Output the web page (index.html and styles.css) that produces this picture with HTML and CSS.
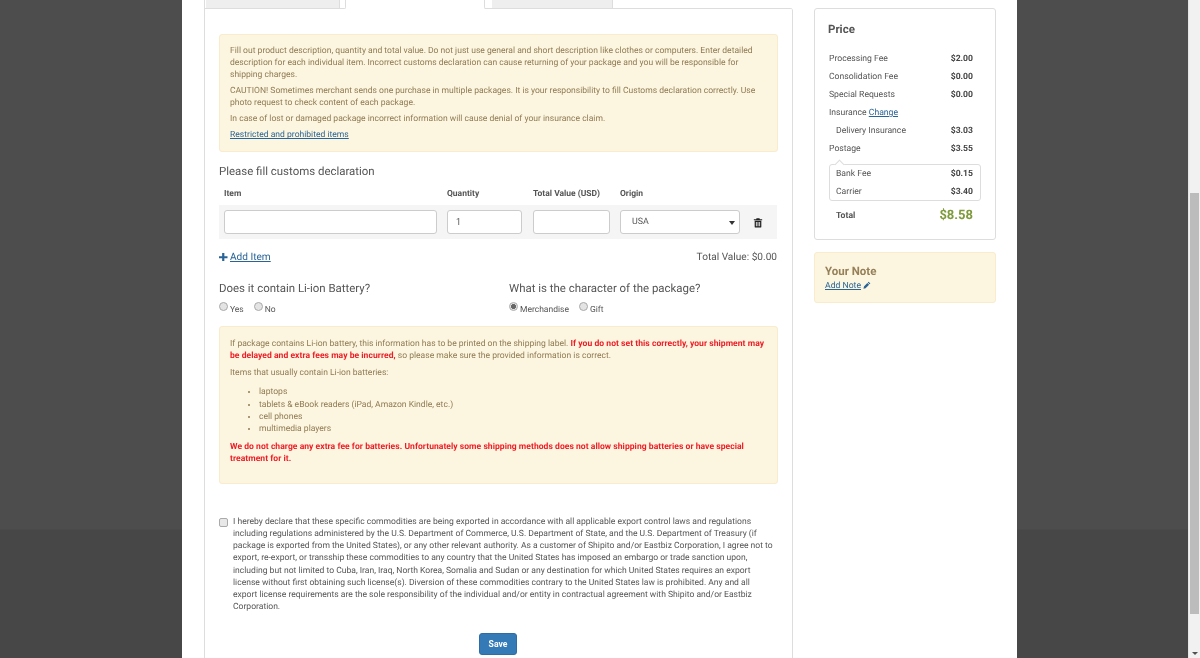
FILE: index.html
```html
<!DOCTYPE html>
<html lang="en">
<head>
<meta charset="utf-8">
<title>Customs declaration</title>
<link rel="stylesheet" href="styles.css">
</head>
<body>
<div class="viewport">
  <div class="backdrop">
    <div class="sheet">
      <main class="main">
        <div class="tabs">
          <div class="tab tab-first"><span class="tab-face"></span></div>
          <div class="tab tab-active"></div>
          <div class="tab tab-last"><span class="tab-face"></span></div>
        </div>
        <div class="panel">
          <section class="alert alert-top">
            <p>Fill out product description, quantity and total value. Do not just use general and short description like clothes or computers. Enter detailed description for each individual item. Incorrect customs declaration can cause returning of your package and you will be responsible for shipping charges.</p>
            <p>CAUTION! Sometimes merchant sends one purchase in multiple packages. It is your responsibility to fill Customs declaration correctly. Use photo request to check content of each package.</p>
            <p>In case of lost or damaged package incorrect information will cause denial of your insurance claim.</p>
            <p><a class="link" href="#">Restricted and prohibited items</a></p>
          </section>
          <h2 class="heading heading-customs">Please fill customs declaration</h2>
          <div class="col-heads">
            <span class="col-item">Item</span>
            <span class="col-qty">Quantity</span>
            <span class="col-total">Total Value (USD)</span>
            <span class="col-origin">Origin</span>
          </div>
          <div class="item-row">
            <input class="field col-item" type="text" aria-label="Item">
            <input class="field col-qty" type="text" value="1" aria-label="Quantity">
            <input class="field col-total" type="text" aria-label="Total value">
            <div class="field col-origin select-box">USA</div>
            <svg class="trash" viewBox="0 0 12 12" aria-hidden="true"><path fill="#222" d="M4.2 1h3.6l.4 1H11v1.3H1V2h2.8zM2 4h8v7a1 1 0 0 1-1 1H3a1 1 0 0 1-1-1zm1.5 1.3v5.2h1V5.3zm2 0v5.2h1V5.3zm2 0v5.2h1V5.3z"/></svg>
          </div>
          <div class="add-row">
            <a class="link add-link" href="#"><svg class="plus" viewBox="0 0 10 10" aria-hidden="true"><path fill="#2a6496" d="M3.7 0h2.6v3.7H10v2.6H6.3V10H3.7V6.3H0V3.7h3.7z"/></svg><span class="add-text">Add Item</span></a>
            <span>Total Value: $0.00</span>
          </div>
          <div class="questions">
            <div class="question">
              <h2 class="heading">Does it contain Li-ion Battery?</h2>
              <div class="choices">
                <label class="choice"><input class="radio" type="radio" name="battery">Yes</label>
                <label class="choice"><input class="radio" type="radio" name="battery">No</label>
              </div>
            </div>
            <div class="question question-right">
              <h2 class="heading">What is the character of the package?</h2>
              <div class="choices">
                <label class="choice"><input class="radio" type="radio" name="kind" checked>Merchandise</label>
                <label class="choice"><input class="radio" type="radio" name="kind">Gift</label>
              </div>
            </div>
          </div>
          <section class="alert alert-battery">
            <p>If package contains Li-ion battery, this information has to be printed on the shipping label. <strong class="danger">If you do not set this correctly, your shipment may be delayed and extra fees may be incurred,</strong> so please make sure the provided information is correct.</p>
            <p>Items that usually contain Li-ion batteries:</p>
            <ul class="battery-list">
              <li>laptops</li>
              <li>tablets &amp; eBook readers (iPad, Amazon Kindle, etc.)</li>
              <li>cell phones</li>
              <li>multimedia players</li>
            </ul>
            <p class="danger">We do not charge any extra fee for batteries. Unfortunately some shipping methods does not allow shipping batteries or have special treatment for it.</p>
          </section>
          <label class="declare">
            <input class="check" type="checkbox">
            <span>I hereby declare that these specific commodities are being exported in accordance with all applicable export control laws and regulations including regulations administered by the U.S. Department of Commerce, U.S. Department of State, and the U.S. Department of Treasury (if package is exported from the United States), or any other relevant authority. As a customer of Shipito and/or Eastbiz Corporation, I agree not to export, re-export, or transship these commodities to any country that the United States has imposed an embargo or trade sanction upon, including but not limited to Cuba, Iran, Iraq, North Korea, Somalia and Sudan or any destination for which United States requires an export license without first obtaining such license(s). Diversion of these commodities contrary to the United States law is prohibited. Any and all export license requirements are the sole responsibility of the individual and/or entity in contractual agreement with Shipito and/or Eastbiz Corporation.</span>
          </label>
          <div class="save-row"><button class="save" type="button">Save</button></div>
        </div>
      </main>
      <aside class="side">
        <section class="price">
          <h3 class="price-title">Price</h3>
          <div class="line"><span>Processing Fee</span><b>$2.00</b></div>
          <div class="line"><span>Consolidation Fee</span><b>$0.00</b></div>
          <div class="line"><span>Special Requests</span><b>$0.00</b></div>
          <div class="line"><span>Insurance <a class="link" href="#">Change</a></span></div>
          <div class="line line-sub"><span>Delivery Insurance</span><b>$3.03</b></div>
          <div class="line"><span>Postage</span><b>$3.55</b></div>
          <div class="breakdown">
            <div class="line"><span>Bank Fee</span><b>$0.15</b></div>
            <div class="line"><span>Carrier</span><b>$3.40</b></div>
          </div>
          <div class="total"><b>Total</b><strong class="total-sum">$8.58</strong></div>
        </section>
        <section class="note">
          <h3 class="note-title">Your Note</h3>
          <a class="link note-link" href="#">Add Note</a>
          <svg class="pencil" viewBox="0 0 10 10" aria-hidden="true"><path fill="#2a6496" d="M7 .8 9.2 3 8.2 4 6 1.8zM5.4 2.4l2.2 2.2-4.4 4.4L.6 9.6l.6-2.8z"/></svg>
        </section>
      </aside>
    </div>
  </div>
  <div class="scrollbar">
    <div class="thumb"></div>
    <div class="arrow-down"></div>
  </div>
</div>
</body>
</html>
```
FILE: styles.css
```css
* { box-sizing: border-box; }
html, body { margin: 0; height: 100%; overflow: hidden; }
body {
  font-family: Roboto, "Liberation Sans", sans-serif;
  font-size: 8.55px;
  line-height: 12.15px;
  color: #555;
  background: #4d4d4d;
  text-rendering: geometricPrecision;
}
p, ul, h2, h3 { margin: 0; padding: 0; }
.viewport { display: flex; height: 658px; overflow: hidden; }
.backdrop {
  flex: 1;
  padding-left: 182px;
  background: linear-gradient(#4d4d4d 529px, #474747 530px);
}
.sheet {
  display: flex;
  align-items: flex-start;
  width: 835px;
  height: 658px;
  padding-left: 22px;
  background: #fff;
  overflow: hidden;
  filter: blur(.4px);
}
.main { width: 589px; flex: none; }
.side { width: 182px; flex: none; margin-left: 21px; padding-top: 8px; }

.tabs { display: flex; height: 9px; }
.tab { height: 9px; border-bottom: 1px solid #ddd; }
.tab-first { width: 142px; padding-left: 1px; border-left: 1px solid #ddd; border-right: 1px solid #ddd; border-bottom-right-radius: 2px; }
.tab-active { width: 138px; border-bottom: 0; }
.tab-last { width: 129px; padding-left: 7px; border-left: 1px solid #ddd; border-right: 0; border-bottom-left-radius: 2px; }
.tab-face { display: block; height: 8px; background: #eee; border-right: 1px solid #ddd; }
.tab-first .tab-face { width: 134px; }
.tab-last .tab-face { width: 121px; }

.panel {
  margin-top: -1px;
  height: 660px;
  padding: 26px 15px 0 14px;
  border: 1px solid #ddd;
  border-top: 0;
  border-radius: 0 3px 0 0;
  position: relative;
  background: linear-gradient(#ddd 1px, transparent 1px) 280px 0 / 309px 1px no-repeat;
}

.alert {
  width: 559px;
  padding: 10px 10px;
  border: 1px solid #faebcc;
  border-radius: 3px;
  background: #fcf6e1;
  color: #8f7a52;
}
.alert p + p { margin-top: 3.8px; }
.alert-top { height: 118px; }
.alert-battery { height: 158px; margin-top: 10px; padding-top: 11px; }
.link { color: #2a6496; text-decoration: underline; }

.heading { font-size: 11.45px; line-height: 15px; font-weight: 400; color: #555; }
.heading-customs { margin-top: 12px; }

.col-heads {
  display: flex;
  margin-top: 9px;
  padding-left: 5px;
  height: 12px;
  font-weight: 700;
  font-size: 8.5px;
}
.col-item { width: 213px; margin-right: 10px; flex: none; }
.col-qty { width: 75px; margin-right: 11px; flex: none; }
.col-total { width: 77px; margin-right: 10px; flex: none; }
.col-origin { width: 120px; flex: none; }

.item-row {
  display: flex;
  align-items: center;
  width: 558px;
  height: 34px;
  margin-top: 5px;
  padding-left: 5px;
  background: #f5f5f5;
}
.field {
  height: 24px;
  padding: 0 8px;
  border: 1px solid #ccc;
  border-radius: 3px;
  background: #fff;
  font: 8.9px Roboto, sans-serif;
  color: #555;
}
.select-box { position: relative; line-height: 22px; padding-left: 11px; }
.select-box::after {
  content: "";
  position: absolute;
  right: 4px;
  top: 10px;
  border: 3px solid transparent;
  border-top: 4px solid #333;
  border-bottom: 0;
}
.trash { width: 10px; height: 11px; margin-left: 13px; flex: none; }

.add-row {
  display: flex;
  justify-content: space-between;
  align-items: center;
  width: 558px;
  margin-top: 13px;
  height: 12px;
  font-size: 10.1px;
}
.add-link { display: flex; align-items: center; text-decoration: none; }
.add-text { text-decoration: underline; }
.plus { width: 8.5px; height: 8.5px; margin: 0 2.5px 2px 0; }

.questions { display: flex; margin-top: 17px; }
.question { width: 290px; flex: none; }
.question-right { width: 268px; }
.choices { display: flex; gap: 10px; margin-top: 6px; font-size: 8.5px; height: 14px; }
.choice { display: flex; align-items: flex-end; line-height: 11px; }
.radio {
  appearance: none;
  width: 9px;
  height: 9px;
  margin: 0 2px 5px 0;
  border: 1px solid #aaa;
  border-radius: 50%;
  background: #e4e4e4;
}
.radio:checked { background: radial-gradient(#666 2.2px, #e4e4e4 2.8px); }

.danger { color: #ee1c25; font-weight: 700; letter-spacing: .04px; }
.battery-list { margin: 7px 0 6px; padding-left: 29px; }
.battery-list li { line-height: 12.2px; }
.alert-battery p + p { margin-top: 5px; }

.declare { display: flex; margin-top: 32px; width: 556px; }
.check {
  appearance: none;
  flex: none;
  width: 9px;
  height: 9px;
  margin: 2px 5px 0 0;
  border: 1px solid #aaa;
  border-radius: 2px;
  background: #e8e8e8;
}
.save-row { display: flex; justify-content: center; margin-top: 20px; width: 558px; }
.save {
  width: 38px;
  height: 22px;
  padding: 0;
  border: 1px solid #2e6da4;
  border-radius: 3px;
  background: #337ab7;
  color: #fff;
  font: 700 8.6px Roboto, sans-serif;
}

.price {
  height: 232px;
  padding: 13px 0 0 14px;
  border: 1px solid #ddd;
  border-radius: 3px;
}
.price-title { font-size: 11.5px; line-height: 14px; font-weight: 700; color: #555; margin: 0 0 15px -1px; }
.line {
  display: flex;
  justify-content: space-between;
  height: 18px;
  padding: 2px 22px 0 0;
  font-size: 8.65px;
}
.line b { color: #444; }
.line-sub { padding-left: 7px; }
.breakdown {
  position: relative;
  width: 152px;
  height: 37px;
  margin-top: 5px;
  padding: 1px 0 0 6px;
  border: 1px solid #ddd;
  border-radius: 3px;
}
.breakdown::before {
  content: "";
  position: absolute;
  left: 6px;
  top: -4px;
  width: 6px;
  height: 6px;
  background: #fff;
  border-left: 1px solid #ddd;
  border-top: 1px solid #ddd;
  transform: rotate(45deg);
}
.breakdown .line { padding-right: 7px; }
.total {
  display: flex;
  justify-content: space-between;
  align-items: center;
  width: 137px;
  height: 20px;
  margin: 5px 0 0 7px;
  font-size: 8.65px;
}
.total-sum { font-size: 13px; color: #7f9a3c; }
.note {
  height: 51px;
  margin-top: 12px;
  padding: 11px 10px 0;
  border: 1px solid #faebcc;
  border-radius: 3px;
  background: #fcf6e1;
  font-size: 8.65px;
}
.note-title { font-size: 11.5px; line-height: 14px; font-weight: 700; color: #96805a; margin-bottom: 2px; }
.pencil { width: 8px; height: 8px; vertical-align: -1px; }

.scrollbar {
  flex: none;
  width: 12px;
  height: 658px;
  padding: 193px 1px 0;
  background: #f1f1f1;
  border-left: 1px solid #e6e6e6;
  position: relative;
}
.thumb { height: 421px; background: #bcbcbc; }
.arrow-down {
  position: absolute;
  left: 3px;
  bottom: 3px;
  border: 3px solid transparent;
  border-top: 3px solid #505050;
  border-bottom: 0;
}
```
